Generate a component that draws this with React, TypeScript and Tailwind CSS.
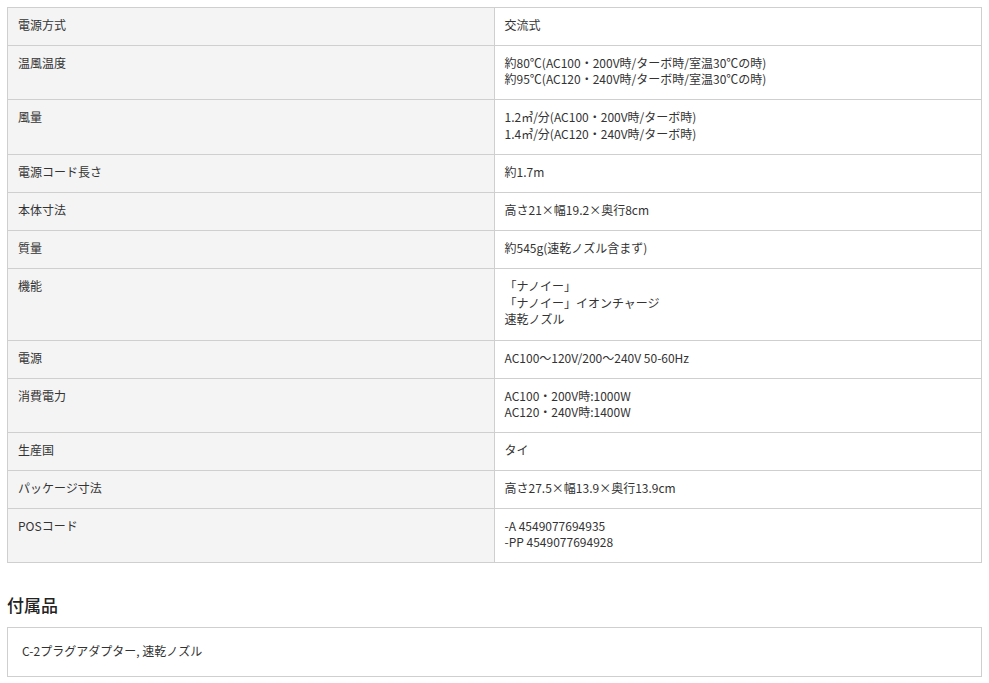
const rows: { label: string; value: string[]; lead?: string }[] = [
  { label: "電源方式", value: ["交流式"] },
  {
    label: "温風温度",
    value: [
      "約80℃(AC100・200V時/ターボ時/室温30℃の時)",
      "約95℃(AC120・240V時/ターボ時/室温30℃の時)",
    ],
  },
  {
    label: "風量",
    value: ["1.2㎥/分(AC100・200V時/ターボ時)", "1.4㎥/分(AC120・240V時/ターボ時)"],
    lead: "leading-[16.5px]",
  },
  { label: "電源コード長さ", value: ["約1.7m"] },
  { label: "本体寸法", value: ["高さ21×幅19.2×奥行8cm"] },
  { label: "質量", value: ["約545g(速乾ノズル含まず)"] },
  {
    label: "機能",
    value: ["「ナノイー」", "「ナノイー」イオンチャージ", "速乾ノズル"],
    lead: "leading-[16.67px]",
  },
  { label: "電源", value: ["AC100～120V/200～240V 50-60Hz"] },
  { label: "消費電力", value: ["AC100・200V時:1000W", "AC120・240V時:1400W"] },
  { label: "生産国", value: ["タイ"] },
  { label: "パッケージ寸法", value: ["高さ27.5×幅13.9×奥行13.9cm"] },
  { label: "POSコード", value: ["-A 4549077694935", "-PP 4549077694928"] },
];

export default function App() {
  return (
    <div
      className="min-h-screen bg-white px-[7px] pt-[7px] text-[12px] leading-[16px] text-[#333]"
      style={{ fontFamily: '"Noto Sans CJK JP", "Noto Sans", sans-serif' }}
    >
      <div className="w-[975px] border-x border-t border-[#cfcfcf]">
        {rows.map((r) => (
          <div key={r.label} className="grid grid-cols-2 border-b border-[#cfcfcf]">
            <div className="border-r border-[#cfcfcf] bg-[#f4f4f4] pb-[12px] pl-[10px] pt-[9px]">
              {r.label}
            </div>
            <div className={`pb-[12px] pl-[10px] pt-[9px] ${r.lead ?? ""}`}>
              {r.value.map((v) => (
                <div key={v}>{v}</div>
              ))}
            </div>
          </div>
        ))}
      </div>

      <h2 className="mt-[30px] text-[17px] font-medium leading-[24px] text-[#222]">付属品</h2>
      <div className="mt-[10px] w-[975px] border border-[#cfcfcf] pb-[17px] pl-[14px] pt-[15px]">
        C-2プラグアダプター, 速乾ノズル
      </div>
    </div>
  );
}
